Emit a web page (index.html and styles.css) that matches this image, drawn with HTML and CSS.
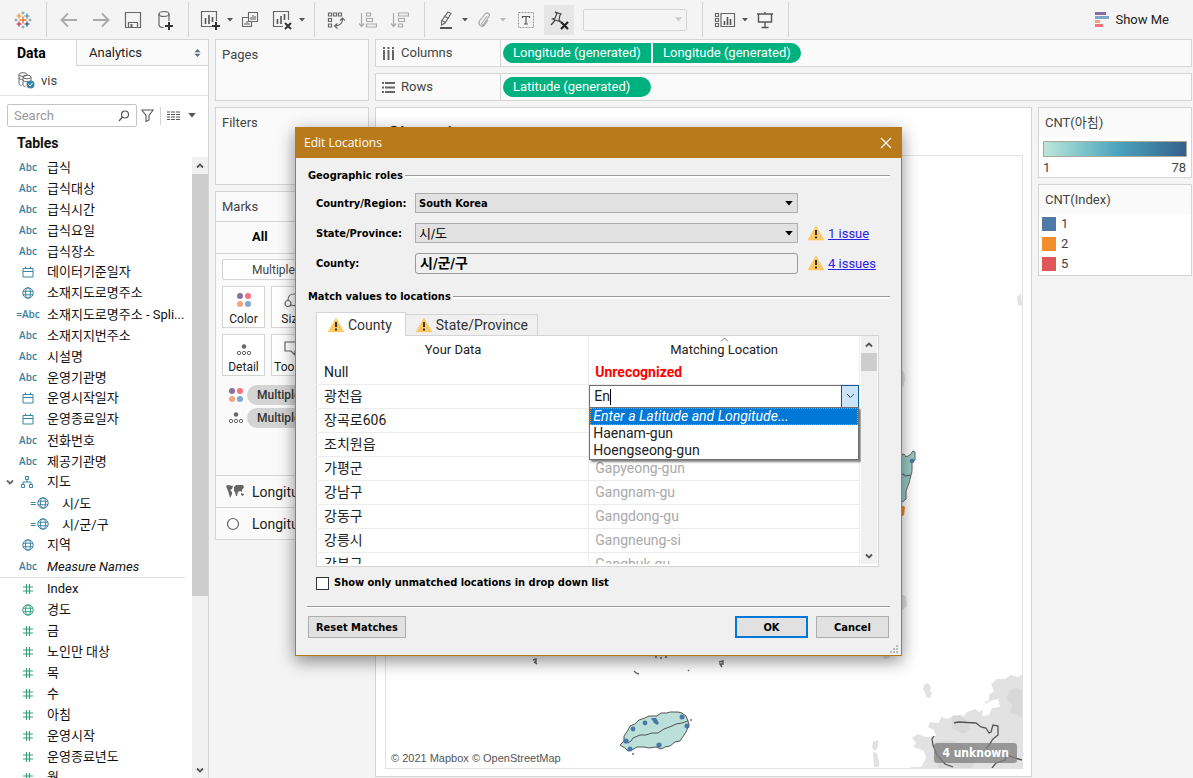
FILE: index.html
```html
<!DOCTYPE html>
<html lang="en">
<head>
<meta charset="utf-8">
<title>Edit Locations</title>
<link rel="stylesheet" href="styles.css">
</head>
<body>
<svg class="defs" aria-hidden="true">
  <symbol id="i-cal" viewBox="0 0 12 12"><path d="M1 2.500h10v8.500H1zM1 5.500h10M3.500 0.500v2M8.500 0.500v2" fill="none" stroke="currentColor"/></symbol>
  <symbol id="i-globe" viewBox="0 0 12 12"><g fill="none" stroke="currentColor"><circle cx="6" cy="6" r="5.200"/><ellipse cx="6" cy="6" rx="2.500" ry="5.200"/><path d="M1 4.200h10M1 7.800h10"/></g></symbol>
  <symbol id="i-hash" viewBox="0 0 12 12"><path d="M1 4h10M1 8h10M4.500 1v10M7.500 1v10" fill="none" stroke="currentColor" stroke-width="1.200"/></symbol>
  <symbol id="i-tree" viewBox="0 0 12 12"><path d="M4.500 0.500h3v3h-3zM0.500 8.500h3v3h-3zM8.500 8.500h3v3h-3zM6 3.500v2.500M2 8.500V6h8v2.500" fill="none" stroke="currentColor"/></symbol>
  <symbol id="i-caret" viewBox="0 0 6 4"><path d="M0 0h6L3 3.500z" fill="currentColor"/></symbol>
  <symbol id="i-warn" viewBox="0 0 16 16"><path d="M8 1L16 15H0z" fill="#fdc964" stroke="#fdc964" stroke-linejoin="round" stroke-width="0.500"/><path d="M7 5h2v5H7zM7 11.500h2v2H7z" fill="#333"/></symbol>
  <symbol id="i-up" viewBox="0 0 8 6"><path d="M1 4.500L4 1.500l3 3" fill="none" stroke="currentColor" stroke-width="1.800"/></symbol>
  <symbol id="i-down" viewBox="0 0 8 6"><path d="M1 1.500L4 4.500l3-3" fill="none" stroke="currentColor" stroke-width="1.800"/></symbol>
  <symbol id="i-dots4" viewBox="0 0 16 16"><circle cx="4" cy="4" r="3" fill="#8a6f9c"/><circle cx="12" cy="4" r="3" fill="#f9707f"/><circle cx="4" cy="12" r="3" fill="#f4a57c"/><circle cx="12" cy="12" r="3" fill="#82a6cf"/></symbol>
  <symbol id="i-detail" viewBox="0 0 16 12"><circle cx="8" cy="2.500" r="2.200" fill="#666"/><g fill="none" stroke="#666"><circle cx="3" cy="9" r="1.700"/><circle cx="8" cy="9" r="1.700"/><circle cx="13" cy="9" r="1.700"/></g></symbol>
</svg>

<div class="app">
<header class="toolbar">
  <div class="group logo">
    <svg width="18" height="18" viewBox="0 0 18 18" fill="none"><path d="M9 5.500v7M5.500 9h7" stroke="#e8762c" stroke-width="1.400"/><path d="M5 2.500v5M2.500 5h5" stroke="#eb912c" stroke-width="1.200"/><path d="M13 2.500v5M10.500 5h5" stroke="#59879b" stroke-width="1.200"/><path d="M5 10.500v5M2.500 13h5" stroke="#c72035" stroke-width="1.200"/><path d="M13 10.500v5M10.500 13h5" stroke="#1f447e" stroke-width="1.200"/><path d="M9 0.500v3M7.500 2h3M9 14.500v3M7.500 16h3M2 7.500v3M0.500 9h3M16 7.500v3M14.500 9h3" stroke="#7099a6"/></svg>
  </div>
  <div class="group">
    <button aria-label="Back"><svg width="18" height="16" viewBox="0 0 18 16"><path d="M17 8H2M8 1.500L1.500 8 8 14.500" fill="none" stroke="#aaa" stroke-width="1.800"/></svg></button>
    <button aria-label="Forward"><svg width="18" height="16" viewBox="0 0 18 16"><path d="M1 8h15M10 1.500L16.500 8 10 14.500" fill="none" stroke="#aaa" stroke-width="1.800"/></svg></button>
    <button aria-label="Save"><svg width="18" height="18" viewBox="0 0 18 18"><path d="M1.500 1.500h15v15h-15zM4.500 16.500v-5h9v5" fill="none" stroke="#666" stroke-width="1.200"/><path d="M6.500 13h2v3h-2z" fill="#666"/></svg></button>
    <button aria-label="New data source"><svg width="18" height="20" viewBox="0 0 18 20"><g fill="none" stroke="#666" stroke-width="1.200"><ellipse cx="8" cy="4" rx="5" ry="2.500"/><path d="M3 4v11c0 1.500 2 2.500 4.500 2.500M13 4v7"/></g><path d="M13 12v8M9 16h8" stroke="#333" stroke-width="2"/></svg></button>
  </div>
  <div class="group tight">
    <button aria-label="New worksheet"><svg width="20" height="20" viewBox="0 0 20 20"><path d="M12 16.500H1.500v-15h15V11" fill="none" stroke="#666" stroke-width="1.200"/><path d="M5.500 8v6M9 5v9M12.500 7v5" stroke="#555" stroke-width="1.600"/><path d="M16 12v8M12 16h8" stroke="#333" stroke-width="2"/></svg></button>
    <button class="car" aria-label="Worksheet menu"><svg width="6" height="4"><use href="#i-caret"/></svg></button>
    <button aria-label="Duplicate"><svg width="18" height="18" viewBox="0 0 18 18"><g fill="none" stroke="#666" stroke-width="1.100"><path d="M7.500 1.500h9v9h-9zM7 6.500H1.500v9h9V11"/><path d="M10 6v3M12 4v5M14 5v4M4 12v2M6 10v4M8 12v2"/></g></svg></button>
    <button aria-label="Clear sheet"><svg width="20" height="20" viewBox="0 0 20 20"><path d="M11 16.500H1.500v-15h15V10" fill="none" stroke="#666" stroke-width="1.200"/><path d="M5.500 9v5M9 6v8M12.500 4v6" stroke="#555" stroke-width="1.600"/><path d="M13 13l6 6M19 13l-6 6" stroke="#333" stroke-width="2"/></svg></button>
    <button class="car" aria-label="Clear menu"><svg width="6" height="4"><use href="#i-caret"/></svg></button>
  </div>
  <div class="group tight">
    <button aria-label="Swap rows and columns"><svg width="18" height="18" viewBox="0 0 18 18"><g fill="none" stroke="#666" stroke-width="1.200"><path d="M1.500 2h3v3h-3zM6.500 2h3v3h-3zM11.500 2h3v3h-3zM1.500 7.500h3v3h-3zM1.500 13h3v3h-3z"/><path d="M15.500 8c0 4-2.500 6.500-7 7M13 9.500L15.500 7 18 9.500M10.500 12.500L7.500 15l3 2.500"/></g></svg></button>
    <button aria-label="Sort ascending"><svg width="18" height="18" viewBox="0 0 18 18"><g fill="none" stroke="#aaa" stroke-width="1.200"><path d="M2.500 2v13M0 12.500L2.500 15.500 5 12.500M7.500 2h4v3h-4zM7.500 7.500h6v3h-6zM7.500 13h10v3h-10z"/></g></svg></button>
    <button aria-label="Sort descending"><svg width="18" height="18" viewBox="0 0 18 18"><g fill="none" stroke="#aaa" stroke-width="1.200"><path d="M2.500 2v13M0 12.500L2.500 15.500 5 12.500M7.500 2h10v3h-10zM7.500 7.500h6v3h-6zM7.500 13h4v3h-4z"/></g></svg></button>
  </div>
  <div class="group marksbar">
    <button aria-label="Highlight"><svg width="14" height="20" viewBox="0 0 14 20"><path d="M9 2l3 1.500L6 13l-3.500 2L2.500 11z M3 10.500l3.500 2M5 6l4 2" fill="none" stroke="#666" stroke-width="1.100"/><path d="M1 17h12v2H1z" fill="#555"/></svg></button>
    <button class="car" aria-label="Highlight menu"><svg width="6" height="4"><use href="#i-caret"/></svg></button>
    <button aria-label="Group members"><svg width="14" height="18" viewBox="0 0 14 18"><path d="M10 5L5 12c-1 1.500 1 2.500 2 1l5-7.500c1.500-3-2-5-4-2.500L2.500 10c-2 4 2.500 7 5 4L11 9" fill="none" stroke="#aaa" stroke-width="1.200"/></svg></button>
    <button class="car off" aria-label="Group menu"><svg width="6" height="4"><use href="#i-caret"/></svg></button>
    <button class="wide" aria-label="Show mark labels"><svg width="18" height="18" viewBox="0 0 18 18"><path d="M1.500 1.500h15v15h-15z" fill="none" stroke="#999" stroke-dasharray="2 1"/><path d="M5.500 7V5.500h7V7M9 5.500V13M7 13h4" fill="none" stroke="#555" stroke-width="1.200"/></svg></button>
    <button class="pin" aria-label="Fix axes"><svg width="20" height="20" viewBox="0 0 20 20"><path d="M6 2l6 2-1 1-1 5 2 2-8.500-3 2.500-1 2-4.500zM6 10.500L2 15" fill="none" stroke="#444" stroke-width="1.200"/><path d="M12 12l7 7M19 12l-7 7" stroke="#222" stroke-width="2.200"/></svg></button>
    <div class="pick fit"><select aria-label="Fit" disabled></select><svg width="7" height="5"><use href="#i-caret"/></svg></div>
  </div>
  <div class="group">
    <button aria-label="Show cards"><svg width="22" height="16" viewBox="0 0 22 16"><path d="M1.500 1.500h3v3h-3zM1.500 6.500h3v3h-3zM1.500 11.500h3v3h-3zM7 1.500h13.500v13H7z" fill="none" stroke="#666" stroke-width="1.200"/><path d="M10.500 9v4M13.500 5v8M16.500 7v6" stroke="#555" stroke-width="1.600"/></svg></button>
    <button class="car" aria-label="Cards menu"><svg width="6" height="4"><use href="#i-caret"/></svg></button>
    <button aria-label="Presentation mode"><svg width="18" height="18" viewBox="0 0 18 18"><path d="M1 3h16M2.500 3v8h13V3M9 11v5M5.500 16.500h7M9 1v2" fill="none" stroke="#555" stroke-width="1.400"/></svg></button>
  </div>
  <button class="showme"><svg width="14" height="15" viewBox="0 0 14 15"><path d="M0 0h11v3H0z" fill="#85709b"/><path d="M0 4h14v3H0z" fill="#7fa6cb"/><path d="M0 8h5v3H0z" fill="#f4a57c"/><path d="M0 12h8v3H0z" fill="#f9707f"/></svg>Show Me</button>
</header>

<main class="work">
  <aside class="data">
    <div class="tabs"><button class="tab on">Data</button><button class="tab">Analytics <svg width="7" height="8" viewBox="0 0 7 8"><path d="M0.500 3.200L3.500 0l3 3.200zM0.500 4.800L3.500 8l3-3.200z" fill="#5a6b7c"/></svg></button></div>
    <div class="source"><svg width="17" height="17" viewBox="0 0 17 17"><g fill="none" stroke="#666"><ellipse cx="5" cy="2.500" rx="4" ry="1.800"/><path d="M1 2.500v9c0 1 1 1.800 2.500 2"/><ellipse cx="9" cy="5" rx="4" ry="1.800"/><path d="M5 5v8c0 1 1 1.500 2.500 1.800M13 5v4M5 8c0 1.500 3 2 5 1.600M1 6c0 1 2 1.500 3.500 1.500"/></g><circle cx="12.500" cy="12.500" r="4" fill="#3a84a5"/><path d="M10.500 12.500l1.500 1.500 2.500-3" fill="none" stroke="#fff"/></svg>vis</div>
    <div class="find">
      <label class="box"><input type="text" placeholder="Search" aria-label="Search"><svg width="12" height="12" viewBox="0 0 12 12"><circle cx="7" cy="4.500" r="3.500" fill="none" stroke="#555" stroke-width="1.200"/><path d="M4.500 7L1 11" stroke="#555" stroke-width="1.300"/></svg></label>
      <button class="ib" aria-label="Filter"><svg width="13" height="13" viewBox="0 0 13 13"><path d="M0.800 1h11.400L8 6.500V11l-3 1.500v-6z" fill="none" stroke="#555" stroke-width="1.100"/></svg></button>
      <i class="bar"></i>
      <button class="ib" aria-label="View as"><svg width="13" height="10" viewBox="0 0 13 10"><path d="M0 1h13M0 3.500h13M0 6h13M0 8.500h13" stroke="#555" stroke-width="1.200" stroke-dasharray="3 1 4 1 4"/></svg></button>
      <button class="ib" aria-label="View menu"><svg width="8" height="5"><use href="#i-caret"/></svg></button>
    </div>
    <h2>Tables</h2>
    <div class="scroller">
      <div class="fields">
        <ul class="dim">
          <li><b>Abc</b>급식</li>
          <li><b>Abc</b>급식대상</li>
          <li><b>Abc</b>급식시간</li>
          <li><b>Abc</b>급식요일</li>
          <li><b>Abc</b>급식장소</li>
          <li><svg><use href="#i-cal"/></svg>데이터기준일자</li>
          <li><svg><use href="#i-globe"/></svg>소재지도로명주소</li>
          <li><b>=Abc</b>소재지도로명주소 - Spli...</li>
          <li><b>Abc</b>소재지지번주소</li>
          <li><b>Abc</b>시설명</li>
          <li><b>Abc</b>운영기관명</li>
          <li><svg><use href="#i-cal"/></svg>운영시작일자</li>
          <li><svg><use href="#i-cal"/></svg>운영종료일자</li>
          <li><b>Abc</b>전화번호</li>
          <li><b>Abc</b>제공기관명</li>
          <li class="parent"><svg class="tw"><use href="#i-down"/></svg><svg><use href="#i-tree"/></svg>지도</li>
          <li class="sub"><b>=</b><svg><use href="#i-globe"/></svg>시/도</li>
          <li class="sub"><b>=</b><svg><use href="#i-globe"/></svg>시/군/구</li>
          <li><svg><use href="#i-globe"/></svg>지역</li>
          <li><b>Abc</b><em>Measure Names</em></li>
        </ul>
        <ul class="mea">
          <li><svg><use href="#i-hash"/></svg>Index</li>
          <li><svg><use href="#i-globe"/></svg>경도</li>
          <li><svg><use href="#i-hash"/></svg>금</li>
          <li><svg><use href="#i-hash"/></svg>노인만 대상</li>
          <li><svg><use href="#i-hash"/></svg>목</li>
          <li><svg><use href="#i-hash"/></svg>수</li>
          <li><svg><use href="#i-hash"/></svg>아침</li>
          <li><svg><use href="#i-hash"/></svg>운영시작</li>
          <li><svg><use href="#i-hash"/></svg>운영종료년도</li>
          <li><svg><use href="#i-hash"/></svg>월</li>
        </ul>
      </div>
      <div class="sbar"><svg width="8" height="6"><use href="#i-up"/></svg><i class="thumb"></i><svg width="8" height="6"><use href="#i-down"/></svg></div>
    </div>
  </aside>

  <section class="cards">
    <div class="card pages">Pages</div>
    <div class="card filters">Filters</div>
    <div class="card marks">
      <div class="mh">Marks</div>
      <div class="all">All</div>
      <div class="mbody">
        <button class="mtype">Multiple</button>
        <div class="mgrid">
          <button><svg width="16" height="16"><use href="#i-dots4"/></svg>Color</button>
          <button><svg width="18" height="16" viewBox="0 0 18 16"><g fill="none" stroke="#666" stroke-width="1.200"><circle cx="4" cy="11.500" r="3"/><path d="M4 8c0-8 12-8 12 0 0 4-4 7-9 5"/></g></svg>Size</button>
          <button><svg width="16" height="16" viewBox="0 -4 16 16"><use href="#i-detail" width="16" height="12"/></svg>Detail</button>
          <button><svg width="18" height="16" viewBox="0 0 18 16"><path d="M1 2h16v9h-6v4l-4-4H1z" fill="none" stroke="#666" stroke-width="1.200"/></svg>Tooltip</button>
        </div>
        <div class="mpill"><svg width="16" height="16"><use href="#i-dots4"/></svg><span>Multiple</span></div>
        <div class="mpill"><svg width="16" height="12"><use href="#i-detail"/></svg><span>Multiple</span></div>
      </div>
      <div class="layer"><svg width="18" height="13" viewBox="0 0 18 13"><path d="M0 1l2-1 5 1-1 3-2 1 2 2v2l-2 4-1-4-1-3zM8 2l2-2 7 0 1 2-2 3 0 2-2-1-2 1-1 4-1 0-1-4-1-1z M15 8l3 1-1 2-2-1z" fill="#666"/></svg>Longitude</div>
      <div class="layer"><svg width="14" height="14" viewBox="0 0 14 14"><circle cx="7" cy="7" r="5.500" fill="none" stroke="#666" stroke-width="1.200"/></svg>Longitude</div>
    </div>
  </section>

  <section class="view">
    <div class="shelf"><span class="sl"><svg width="13" height="13" viewBox="0 0 13 13"><path d="M2 0v2M2 3v10M6.500 0v2M6.500 3v10M11 0v2M11 3v10" stroke="#666" stroke-width="2"/></svg>Columns</span><span class="pill first">Longitude (generated)</span><span class="pill last">Longitude (generated)</span></div>
    <div class="shelf"><span class="sl"><svg width="13" height="13" viewBox="0 0 13 13"><path d="M0 2h2M3 2h10M0 6.500h2M3 6.500h10M0 11h2M3 11h10" stroke="#666" stroke-width="2"/></svg>Rows</span><span class="pill">Latitude (generated)</span></div>
    <div class="lower">
      <div class="sheet">
        <h1>Sheet 1</h1>
        <div class="map">
          <svg viewBox="386 156 636 612" preserveAspectRatio="xMaxYMax slice" role="img" aria-label="Map">
            <g fill="#e2e2e2">
              <path d="M902 370c4 4 4 14 0 18h-3v-18zM1021 293l-4 4 1 8 4 1zM900 594l6 2 1 10-7 6zM924 685l4-2 3 4-1 4 2 2-2 5-4-1-1-5-2-2zM882 654h10l-3 4-5 1zM873 742l5-2 0 7-3 4-3-3zM873 752l4 1 2 8 0 6h-5z"/>
              <path d="M1022 675l-5 2-6-2-6 4-8 0-6 5 3 7-5 4 0 5-4 2 1 6-7 4-4-3-8 3-5 6-8-3-6 4-7-2-2 6-9-1-2 5 6 3 2 6-10 1-8-3-6 4 4 5-3 4-9-2-5 5 2 6 6-1 4 8-2 12h116z"/>
              <path d="M1022 690l-6-2-7 3-2 8 5 6-2 8 12 4zM952 716l9-1 6 6 4 9-8 4-11-6zM936 742l14-2 20 8 8 10-6 10h-34z" fill="#d8d8d8"/>
              <path d="M984 705l6-4 8-2 2 8-8 1-3 7-7 1zM916 748l8 3 2 7-5 9h-24l-4-16 9-7 8 2zM902 733l9-4 4 4-5 5z" fill="#fff"/>
            </g>
            <g fill="none" stroke="#555" stroke-width="1.300"><path d="M954 723l4-1 18 1 5 4 5 1 3 5 2-1 2-7 5 1 0 9-5 4-4 6-3 4M934 736l-2 3 1 6 4 10 8 9 8 3M992 768l4-5 9-3 2-5 8 3 7 2"/></g>
            <path d="M901 455l3-1 2 3 4-2 3-4 2 1 0 8-3 3 0 8-3 12-3 8 0 8-5 4z" fill="#9acbc6" stroke="#666"/><path d="M901 473l5 3 5-1" fill="none" stroke="#555"/><circle cx="912" cy="461" r="2.300" fill="#4878a8"/><path d="M901 505l4 2-1 8-3 2z" fill="#e8862c"/>
            <path d="M624 741l0-5 4-6 2-4 5-2 4-4 6-2 4-2 8 0 4-3 6 0 3-1 8 0 4 1 4 3 2 5 1 4-3 7-4 6-2 3-5 1-5 4-5 1-4 2-5-2-7 1-5-1-7 0-5 3-4 1-3-3-5-3z" fill="#bbdfd9" stroke="#555"/><path d="M628 743l3-2 2-3 7-3 6 0 6-2 6 0 6-4 8-3 4-2 6-1 6-2" fill="none" stroke="#555"/>
            <g fill="#4878a8"><circle cx="626" cy="741" r="2.600"/><circle cx="633" cy="729" r="2.400"/><circle cx="645" cy="723" r="2.400"/><path d="M651 718l5 0 3 5-2 2-3-2z"/><circle cx="682" cy="717" r="2.500"/><circle cx="687" cy="726" r="2.500"/><circle cx="659" cy="745" r="2.600"/><circle cx="630" cy="749" r="2.500"/></g>
            <g fill="none" stroke="#666" stroke-width="1.400"><path d="M533 660l3-1 0 3-2 0M534 662l3 2M634 671l2 2 3 1M688 671l1-1M719 662l4-1 0 3-3 0 2 3M655 657l2 0M660 658l2 0M665 657l2 0M691 719l0 2M633 753l0 2"/></g>
          </svg>
          <small>© 2021 Mapbox © OpenStreetMap</small>
          <button class="unk">4 unknown</button>
        </div>
      </div>
      <div class="legends">
        <div class="legend ramp"><h3>CNT(아침)</h3><div class="grad"></div><p><span>1</span><span>78</span></p></div>
        <div class="legend"><h3>CNT(Index)</h3><ul><li><i class="c1"></i>1</li><li><i class="c2"></i>2</li><li><i class="c3"></i>5</li></ul></div>
      </div>
    </div>
  </section>
</main>

<div class="dialog" role="dialog" aria-labelledby="dt">
  <div class="title"><span id="dt">Edit Locations</span><button aria-label="Close"><svg width="12" height="12" viewBox="0 0 12 12"><path d="M1 1l10 10M11 1L1 11" stroke="#fff" stroke-width="1.200"/></svg></button></div>
  <div class="dbody">
    <h4>Geographic roles</h4>
    <div class="roles">
      <label for="cr">Country/Region:</label><div class="pick"><select id="cr"><option>South Korea</option></select><svg width="8" height="5"><use href="#i-caret"/></svg></div><span></span>
      <label for="sp">State/Province:</label><div class="pick"><select id="sp" class="thin"><option>시/도</option></select><svg width="8" height="5"><use href="#i-caret"/></svg></div><span class="issue"><svg width="16" height="16"><use href="#i-warn"/></svg><a href="#">1 issue</a></span>
      <label for="co">County:</label><input id="co" type="text" value="시/군/구" readonly><span class="issue"><svg width="16" height="16"><use href="#i-warn"/></svg><a href="#">4 issues</a></span>
    </div>
    <h4>Match values to locations</h4>
    <div class="dtabs"><button class="on"><svg width="16" height="16"><use href="#i-warn"/></svg>County</button><button><svg width="16" height="16"><use href="#i-warn"/></svg>State/Province</button></div>
    <div class="panel">
      <div class="clip">
        <table>
          <thead><tr><th>Your Data</th><th><svg class="asc" width="9" height="5" viewBox="0 0 9 5"><path d="M1 4.500L4.500 1 8 4.500" fill="none" stroke="#777"/></svg>Matching Location</th></tr></thead>
          <tbody>
            <tr><td>Null</td><td class="bad">Unrecognized</td></tr>
            <tr><td>광천읍</td><td class="edit">
              <div class="combo"><input type="text" value="En" aria-label="Matching location"><i class="cursor"></i><button aria-label="Open list"><svg width="9" height="6" viewBox="0 0 9 6"><path d="M1 1l3.500 3.500L8 1" fill="none" stroke="#444"/></svg></button>
              <ul class="menu"><li class="sel">Enter a Latitude and Longitude...</li><li>Haenam-gun</li><li>Hoengseong-gun</li></ul></div></td></tr>
            <tr><td>장곡로606</td><td></td></tr>
            <tr><td>조치원읍</td><td></td></tr>
            <tr><td>가평군</td><td>Gapyeong-gun</td></tr>
            <tr><td>강남구</td><td>Gangnam-gu</td></tr>
            <tr><td>강동구</td><td>Gangdong-gu</td></tr>
            <tr><td>강릉시</td><td>Gangneung-si</td></tr>
            <tr><td>강북구</td><td>Gangbuk-gu</td></tr>
          </tbody>
        </table>
      </div>
      <div class="sbar small"><svg width="8" height="6"><use href="#i-up"/></svg><i class="thumb"></i><svg width="8" height="6"><use href="#i-down"/></svg></div>
    </div>
    <label class="only"><input type="checkbox">Show only unmatched locations in drop down list</label>
    <div class="foot"><button>Reset Matches</button><button class="ok">OK</button><button>Cancel</button></div>
  </div>
  <svg class="grip" width="8" height="8" viewBox="0 0 8 8"><path d="M6 0h2v2H6zM3 3h2v2H3zM6 3h2v2H6zM0 6h2v2H0zM3 6h2v2H3zM6 6h2v2H6z" fill="#bbb"/></svg>
</div>
</div>
</body>
</html>
```
FILE: styles.css
```css
* { box-sizing: border-box; }
:root {
  --ui: Roboto, "Noto Sans CJK KR", sans-serif;
  --bold: "DejaVu Sans Condensed", "DejaVu Sans", "Noto Sans CJK KR", sans-serif;
  --line: #d4d4d4;
}
body { margin: 0; background: #f4f4f4; font: 13px/18px var(--ui); color: #444; }
button, input, select { font: inherit; color: inherit; margin: 0; }
button { background: none; border: 0; padding: 0; }
ul { list-style: none; margin: 0; padding: 0; }
h1, h2, h3, h4, p { margin: 0; font-weight: 400; }
svg { flex: none; display: block; }
.defs { position: absolute; width: 0; height: 0; }
.app { position: relative; display: flex; flex-direction: column; height: 100vh; overflow: hidden; }

.toolbar { display: flex; align-items: center; height: 39px; flex: none; }
.group { display: flex; align-items: center; height: 35px; padding: 0 7px 0 6px; border-right: 1px solid var(--line); color: #555; }
.group.logo { padding: 0 14px; width: 47px; }
.group.tight { padding: 0 8px 0 5px; }
.group button { width: 32px; height: 30px; display: flex; align-items: center; justify-content: center; }
.group button.car { width: 8px; }
.group button.off { color: #bbb; }
.marksbar button { width: 30px; }
.group button.wide { width: 37px; }
.group button.pin { width: 30px; background: #e6e6e6; }
.showme { margin-left: auto; margin-right: 24px; display: flex; align-items: center; gap: 6px; color: #222; }
.pick { display: grid; align-items: center; }
.pick > * { grid-area: 1 / 1; }
.pick select { appearance: none; width: 100%; height: 20px; border: 1px solid #adadad; border-radius: 0; background: #e1e1e1; padding: 0 3px; color: #000; opacity: 1; }
.pick svg { justify-self: end; margin-right: 5px; color: #000; pointer-events: none; }
.fit { width: 104px; margin: 0 8px 0 9px; }
.fit select { height: 22px; background: #f4f4f4; border-color: var(--line); border-radius: 2px; }
.fit svg { color: #ccc; }

.work { flex: 1; min-height: 0; display: grid; grid-template-columns: 209px 154px minmax(0, 1fr); column-gap: 6px; padding-right: 1px; }
.data { background: #fff; border-right: 1px solid var(--line); display: flex; flex-direction: column; min-height: 0; }
.tabs { display: flex; height: 27px; flex: none; }
.tab { color: #222; border: 1px solid var(--line); border-width: 1px 0; display: flex; align-items: center; }
.tab.on { width: 76px; padding-left: 17px; font-size: 14px; font-weight: 700; color: #000; border-bottom-color: #fff; }
.tab:last-child { flex: 1; padding: 0 7px 0 12px; border-left-width: 1px; background: #fafafa; justify-content: space-between; }
.source { height: 30px; flex: none; display: flex; align-items: center; gap: 6px; padding-left: 18px; border-bottom: 1px solid #e2e2e2; }
.find { display: flex; align-items: center; height: 39px; flex: none; padding-left: 7px; }
.box { display: flex; align-items: center; width: 130px; height: 23px; border: 1px solid #c4c4c4; border-radius: 2px; padding: 0 6px; }
.box input { min-width: 0; flex: 1; border: 0; padding: 0; background: none; outline: 0; }
.box input::placeholder { color: #999; opacity: 1; }
.ib { padding: 4px; color: #555; }
.bar { width: 1px; height: 18px; background: var(--line); margin: 0 2px; }
.data h2 { font-size: 14px; font-weight: 700; color: #111; line-height: 16px; padding-left: 17px; height: 22px; flex: none; }
.scroller { flex: 1; min-height: 0; display: flex; }
.fields { flex: 1; overflow: hidden; }
.fields li { height: 21px; line-height: 19px; display: grid; grid-template-columns: 34px auto; column-gap: 2px; justify-content: start; align-items: center; align-content: start; padding-left: 11px; white-space: nowrap; color: #111; }
.fields li > svg { width: 12px; height: 12px; justify-self: center; }
.fields b { font: 600 10px/20px "Open Sans", sans-serif; justify-self: center; color: #3b7f9c; }
.dim { border-bottom: 1px solid #dcdcdc; margin-right: 7px; }
.dim svg { color: #3b84a3; }
.mea { padding-top: 1px; }
.mea svg { color: #34a37b; }
.fields li.parent { padding-left: 6px; grid-template-columns: 14px 25px auto; column-gap: 1px; }
.fields li.parent svg { justify-self: start; }
.fields li.parent .tw { width: 8px; height: 6px; color: #666; }
.fields li.sub { padding-left: 31px; grid-template-columns: 4px 23px auto; }
.fields li.sub svg { justify-self: start; }
.sbar { width: 16px; background: #f0f0f0; display: flex; flex-direction: column; align-items: center; color: #555; }
.sbar svg { margin: 6px 0 5px; }
.sbar .thumb { width: 100%; background: #cdcdcd; height: 422px; margin-bottom: auto; }

.cards { display: flex; flex-direction: column; gap: 6px; }
.card { background: #fafafa; border: 1px solid var(--line); }
.pages, .filters { padding: 6px; }
.pages { height: 62px; }
.filters { height: 78px; }
.mh { height: 30px; padding: 6px; border-bottom: 1px solid var(--line); }
.all { height: 32px; padding: 6px 0 0 36px; font-weight: 700; color: #000; border-bottom: 1px solid var(--line); }
.mbody { padding: 5px 6px 0; height: 221px; font-size: 12px; }
.mtype { display: block; width: 100%; height: 21px; padding-left: 29px; text-align: left; border: 1px solid var(--line); border-radius: 2px; background: #fff; }
.mgrid { display: grid; grid-template-columns: repeat(2, 43px); gap: 6px; margin: 6px 0 7px; color: #222; }
.mgrid button { height: 42px; border: 1px solid var(--line); background: #fff; display: flex; flex-direction: column; align-items: center; justify-content: space-between; padding: 5px 0 0; line-height: 16px; }
.mpill { display: grid; grid-template-columns: 16px 1fr; gap: 3px; align-items: center; height: 23px; padding-left: 6px; }
.mpill span { background: #d4d4d4; border-radius: 10px; line-height: 20px; padding-left: 10px; white-space: nowrap; color: #333; font-weight: 500; }
.layer { height: 32px; display: grid; grid-template-columns: 18px 1fr; gap: 8px; justify-items: start; align-items: center; padding-left: 10px; border-top: 1px solid var(--line); font-size: 14px; color: #222; }

.view { display: flex; flex-direction: column; gap: 6px; min-height: 0; min-width: 0; }
.shelf { height: 28px; flex: none; display: flex; align-items: center; background: #fafafa; border: 1px solid var(--line); }
.sl { width: 125px; height: 100%; display: flex; align-items: center; gap: 6px; padding-left: 6px; border-right: 1px solid var(--line); margin-right: 2px; }
.pill { background: #00b180; color: #fff; width: 148px; height: 20px; line-height: 20px; padding-left: 10px; border-radius: 10px; white-space: nowrap; }
.pill.first { border-radius: 10px 0 0 10px; margin-right: 2px; }
.pill.last { border-radius: 0 10px 10px 0; }
.lower { flex: 1; min-height: 0; display: grid; grid-template-columns: minmax(0, 1fr) 154px; gap: 6px; }
.sheet { background: #fff; border: 1px solid var(--line); margin-bottom: 2px; padding: 14px 8px 7px 9px; display: flex; flex-direction: column; }
.sheet h1 { font-size: 20px; line-height: 24px; padding-left: 3px; height: 33px; color: #111; }
.map { flex: 1; min-height: 0; border: 1px solid #e2e2e2; display: grid; grid-template: minmax(0, 1fr) / minmax(0, 1fr); }
.map > * { grid-area: 1 / 1; }
.map > svg { width: 100%; height: 100%; }
.map small { place-self: end start; font: 11px/19px "Liberation Sans", sans-serif; color: #555; padding: 0 5px; }
.unk { place-self: end; margin: 0 5px 5px 0; background: rgba(125, 125, 125, .75); color: #fff; font: 700 12px/20px var(--bold); padding: 0 8px; border-radius: 3px; }
.legends { display: flex; flex-direction: column; gap: 6px; }
.legend { background: #fff; border: 1px solid var(--line); }
.legend h3 { font-size: 13px; line-height: 29px; background: #fafafa; padding-left: 6px; }
.grad { height: 16px; margin: 4px; border: 1px solid #a9a99a; background: linear-gradient(90deg, #bde6d9, #4aa5bd 52%, #35608e); }
.legend p { display: flex; justify-content: space-between; padding: 0 5px 0 4px; line-height: 14px; }
.ramp { height: 71px; }
.legend ul { padding: 0 0 1px 3px; }
.legend li { display: flex; align-items: center; gap: 5px; height: 20px; }
.legend i { width: 14px; height: 14px; }
.c1 { background: #4e79a7; } .c2 { background: #f28e2b; } .c3 { background: #e15759; }

.dialog { position: absolute; left: 295px; top: 127px; width: 607px; background: #f0f0f0; border: 1px solid #b97a1b; box-shadow: 0 5px 16px rgba(0, 0, 0, .45); color: #000; }
.title { height: 30px; background: #b97a1b; color: #fff; display: flex; justify-content: space-between; align-items: center; padding: 0 9px 0 8px; font: 12px/18px "Open Sans", sans-serif; }
.dbody { padding: 8px 11px 17px; }
.dbody h4 { display: flex; align-items: center; gap: 2px; font: 700 11px/20px var(--bold); padding-left: 1px; }
.dbody h4::after { content: ""; flex: 1; height: 2px; border-top: 1px solid #999; background: #fff; }
.roles { display: grid; grid-template-columns: 99px 383px 1fr; grid-auto-rows: 20px; row-gap: 10px; align-items: center; padding: 7px 0 14px 9px; font: 700 11px/18px var(--bold); }
.roles label { padding-top: 2px; }
.roles select { font-weight: 700; padding-top: 1px; }
.roles .thin { font-weight: 400; font-size: 13px; }
.roles input { height: 21px; border: 1px solid #999; border-radius: 3px; background: #f0f0f0; padding: 0 4px 2px; font-size: 14px; }
.issue { display: flex; align-items: center; gap: 4px; padding-left: 10px; font: 13px/18px var(--ui); }
.issue a { color: #2a22e8; padding-top: 1px; }
.dtabs { display: flex; align-items: flex-end; padding-left: 9px; margin-top: 5px; font-size: 14px; }
.dtabs button { height: 21px; padding: 0 9px 0 10px; border: 1px solid var(--line); border-bottom: 0; border-left: 0; display: flex; align-items: center; gap: 4px; color: #333; }
.dtabs button.on { height: 24px; margin-bottom: -1px; border-left: 1px solid var(--line); background: #fff; padding: 0 13px 0 11px; z-index: 1; }
.panel { margin: 0 11px 0 9px; height: 232px; border: 1px solid var(--line); background: #fff; display: flex; padding: 0 1px 2px; }
.clip { flex: 1; height: 228px; overflow: hidden; padding-right: 1px; }
table { width: 100%; border-collapse: collapse; table-layout: fixed; font-size: 14px; line-height: 18px; }
th { height: 24px; font-weight: 400; font-size: 13px; padding: 3px 0 0; position: relative; color: #222; }
th, td { border-right: 1px solid #ececec; }
.asc { position: absolute; left: 50%; top: 1px; margin-left: -4px; }
td { height: 24px; padding: 0 6px; border-bottom: 1px solid #ececec; color: #aaa; }
td:first-child { color: #222; }
td.bad { color: #f00; font-weight: 700; }
td.edit { padding: 0; }
.combo { position: relative; display: flex; height: 23px; border: 1px solid #707070; color: #222; }
.combo input { width: 0; flex: 1; min-width: 0; border: 0; padding: 0 4px; outline: 0; }
.combo button { width: 18px; background: #cce4f7; border: 1px solid #0a5a9c; display: grid; place-items: center; margin: -1px; }
.cursor { position: absolute; left: 20px; top: 3px; width: 1px; height: 16px; background: #000; }
.menu { position: absolute; left: -1px; right: -1px; top: 21px; background: #fff; border: 1px solid #707070; box-shadow: 2px 2px 2px rgba(0, 0, 0, .5); z-index: 2; }
.menu li { line-height: 17px; padding: 0 3px; }
.menu .sel { background: #0078d7; color: #fff; font-style: italic; outline: 1px dotted #ff8728; outline-offset: -1px; }
.sbar.small { height: 228px; flex: none; }
.sbar.small .thumb { height: 18px; }
.only { display: flex; align-items: center; gap: 5px; margin: 6px 0 0 9px; font: 700 11px/20px var(--bold); }
.only input { appearance: none; width: 13px; height: 13px; border: 1px solid #333; background: #fff; margin: 0; }
.foot { display: flex; gap: 8px; margin-top: 13px; border-top: 1px solid #999; box-shadow: inset 0 1px #fff; padding: 9px 1px 0; font: 700 11px/18px var(--bold); }
.foot button { height: 22px; min-width: 73px; border: 1px solid #adadad; background: #e1e1e1; padding: 1px 7px 0; }
.foot .ok { margin-left: auto; border: 2px solid #0078d7; }
.grip { position: absolute; right: 3px; bottom: 2px; }
```
